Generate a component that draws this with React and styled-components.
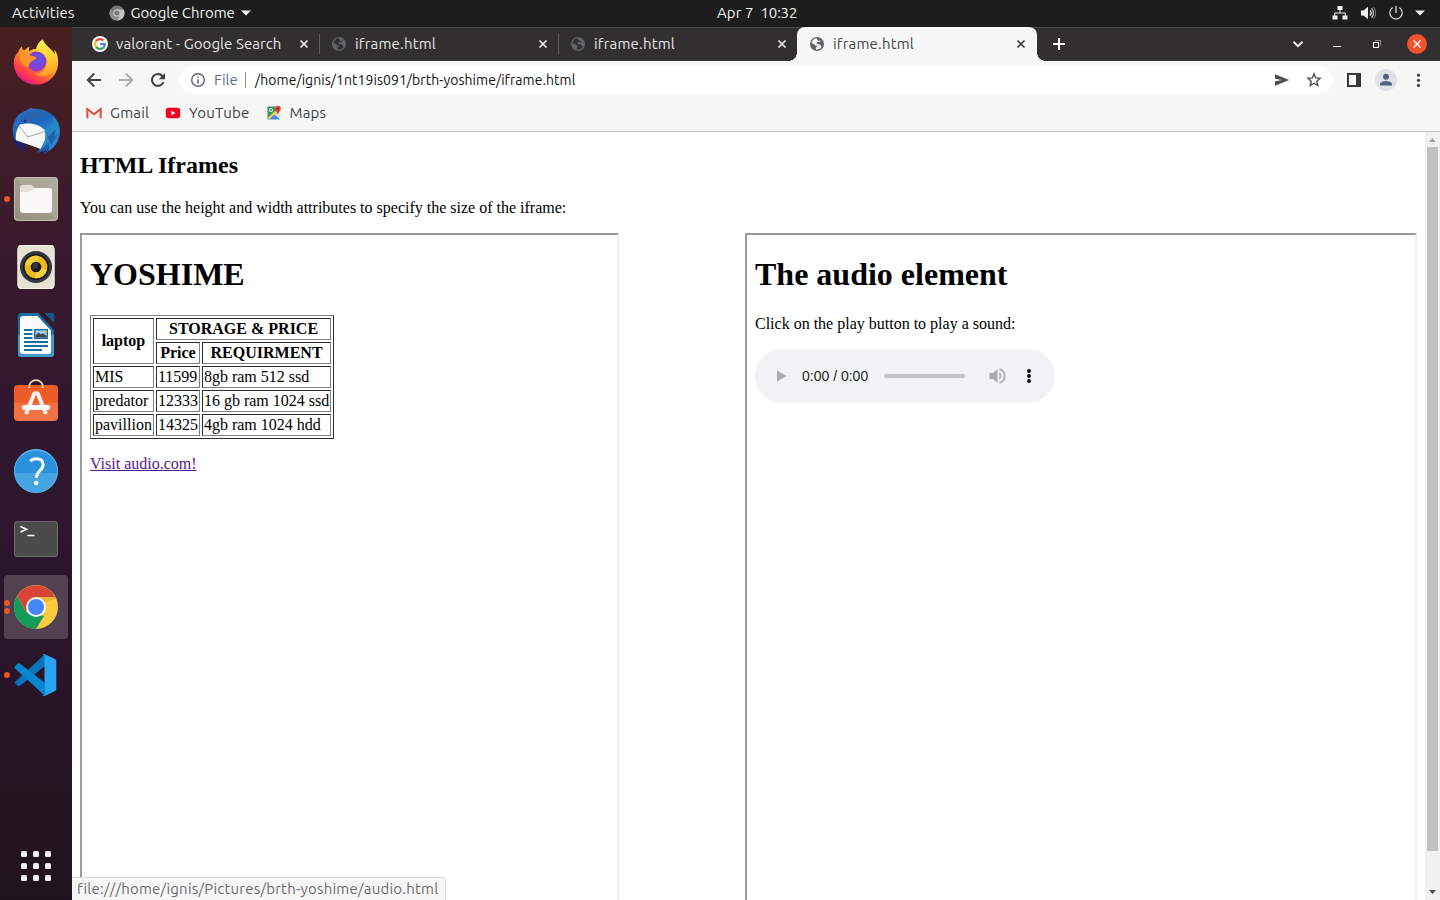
import React from 'react';
import styled, { createGlobalStyle } from 'styled-components';

const GlobalStyle = createGlobalStyle`
  *, *::before, *::after { box-sizing: border-box; }
  html, body { margin: 0; height: 100%; overflow: hidden; }
  svg { display: block; flex: none; }
`;

const Desktop = styled.div`
  width: 1440px;
  height: 900px;
  display: flex;
  flex-direction: column;
  overflow: hidden;
  background: #1d1d1d;
  font-family: 'Ubuntu', 'Noto Sans', sans-serif;
  font-size: 15px;
`;

const Label = styled.span`
  font-size: ${(p) => p.$size || 15}px;
  line-height: 20px;
  letter-spacing: ${(p) => p.$track || 0}px;
  white-space: pre;
`;

/* ---------- top bar ---------- */
const TopBar = styled.header`
  height: 27px;
  flex: none;
  display: grid;
  grid-template-columns: 717px 1fr auto;
  align-items: center;
  padding: 0 10px 1px 0;
  color: #f2f2f2;
  background: #1d1d1d;
`;
const TopLeft = styled.div`
  display: flex;
  align-items: center;
  padding-left: 12px;
`;
const AppMenu = styled.div`
  display: flex;
  align-items: center;
  gap: 6px;
  margin-left: 34px;
`;
const Clock = styled.div`
  display: flex;
  gap: 7px;
`;
const Tray = styled.div`
  display: flex;
  align-items: center;
`;
const TrayIcon = styled.div`
  width: ${(p) => p.$w}px;
  display: flex;
  justify-content: center;
`;

/* ---------- dock ---------- */
const Body = styled.div`
  flex: 1;
  min-height: 0;
  display: flex;
`;
const Dock = styled.nav`
  width: 72px;
  flex: none;
  display: flex;
  flex-direction: column;
  gap: 4px;
  padding: 4px 4px 2px;
  background: linear-gradient(#482021 0%, #3b1a2b 21%, #30172f 45%, #2a152b 72%, #24141f 90%, #21131b 100%);
`;
const DockItem = styled.div`
  width: 64px;
  height: 64px;
  flex: none;
  display: flex;
  align-items: center;
  border-radius: 4px;
  background: ${(p) => (p.$active ? '#524251' : 'transparent')};
`;
const Dots = styled.div`
  width: 6px;
  margin-right: 2px;
  display: flex;
  flex-direction: column;
  gap: 2px;
`;
const Dot = styled.i`
  width: 6px;
  height: 6px;
  border-radius: 50%;
  background: #e95420;
`;
const AppsButton = styled.div`
  margin-top: auto;
  height: 64px;
  display: grid;
  grid-template-columns: repeat(3, 6px);
  grid-auto-rows: 6px;
  gap: 6px;
  place-content: center;
`;
const AppsDot = styled.i`
  border-radius: 1.5px;
  background: #f0efee;
`;

/* ---------- browser ---------- */
const Browser = styled.main`
  flex: 1;
  min-width: 0;
  display: flex;
  flex-direction: column;
  background: #f7f7f7;
`;
const TabStrip = styled.div`
  height: 34px;
  flex: none;
  display: flex;
  padding-left: 8px;
  background: #322f30;
  box-shadow: inset 0 1px 0 #484546;
`;
const Tab = styled.div`
  position: relative;
  width: ${(p) => (p.$active ? 240 : 239)}px;
  display: flex;
  align-items: center;
  gap: 8px;
  padding: 0 ${(p) => (p.$active ? 11 : 10)}px 0 12px;
  color: ${(p) => (p.$active ? '#45464a' : '#e6e6e6')};
  background: ${(p) => (p.$active ? '#f7f7f7' : 'transparent')};
  border-radius: 8px 8px 0 0;

  &::before, &::after {
    content: '';
    display: ${(p) => (p.$active ? 'block' : 'none')};
    position: absolute;
    bottom: 0;
    width: 8px;
    height: 8px;
  }
  &::before { left: -8px; background: radial-gradient(circle at 0 0, transparent 7.5px, #f7f7f7 8px); }
  &::after { right: -8px; background: radial-gradient(circle at 100% 0, transparent 7.5px, #f7f7f7 8px); }
`;
const TabTitle = styled(Label)`
  flex: 1;
`;
const TabDivider = styled.i`
  width: 1px;
  height: 20px;
  margin: 7px -1px 0 0;
  background: #5f5d5e;
`;
const NewTab = styled.div`
  display: flex;
  align-items: center;
  margin-left: 16px;
`;
const WindowControls = styled.div`
  margin-left: auto;
  padding-right: 3px;
  display: flex;
  align-items: center;
`;
const Control = styled.div`
  width: ${(p) => p.$w || 40}px;
  display: flex;
  justify-content: center;
`;
const Toolbar = styled.div`
  height: 38px;
  flex: none;
  display: flex;
  align-items: center;
  padding: 0 6px;
`;
const ToolButton = styled.div`
  width: 32px;
  display: flex;
  justify-content: center;
`;
const Omnibox = styled.div`
  flex: 1;
  height: 30px;
  margin: 0 6px;
  display: flex;
  align-items: center;
  padding: 0 2px 0 10px;
  border-radius: 15px;
  background: #fff;
`;
const Scheme = styled(Label)`
  width: 24px;
  margin-left: 8px;
  color: #5c6f86;
`;
const OmniDivider = styled.i`
  width: 1px;
  height: 16px;
  margin: 0 9px 0 7px;
  background: #8a8d91;
`;
const Url = styled(Label)`
  flex: 1;
  color: #111;
`;
const Avatar = styled.div`
  width: 22px;
  height: 22px;
  display: grid;
  place-items: center;
  border-radius: 50%;
  background: #dee1e6;
`;
const Bookmarks = styled.div`
  height: 33px;
  flex: none;
  display: flex;
  gap: 16px;
  padding: 4px 14px 0;
  border-bottom: 1px solid #c1c0c0;
  color: #404246;
`;
const Bookmark = styled.div`
  height: 20px;
  display: flex;
  align-items: center;
  gap: 8px;
`;

/* ---------- page ---------- */
const Viewport = styled.div`
  position: relative;
  flex: 1;
  min-height: 0;
  display: flex;
  background: #fff;
`;
const Page = styled.div`
  flex: 1;
  overflow: hidden;
  padding: 0 8px;
  color: #000;
  font-family: 'Liberation Serif', serif;
  font-size: 16px;
  line-height: 18px;
`;
const PageTitle = styled.h2`
  margin: 20px 0;
  font-size: 24px;
  line-height: 27px;
`;
const Text = styled.p`
  margin: 16px 0;
`;
const Frames = styled.div`
  display: flex;
  justify-content: space-between;
`;
const Frame = styled.section`
  width: ${(p) => p.$w}px;
  height: 800px;
  padding: 0 8px;
  border: 2px solid;
  border-color: #9a9a9a #eee #eee #9a9a9a;
`;
const FrameTitle = styled.h1`
  margin: 21px 0 22px;
  font-size: 32px;
  line-height: 37px;
`;
const Table = styled.table`
  border: 1px solid;
  border-color: #808080 #2c2c2c #2c2c2c #808080;
  border-spacing: 2px;

  th, td {
    padding: 1px;
    border: 1px solid;
    border-color: #2c2c2c #808080 #808080 #2c2c2c;
  }
`;
const Visited = styled.span`
  color: #551a8b;
  text-decoration: underline;
`;
const Player = styled.div`
  width: 300px;
  height: 54px;
  display: flex;
  align-items: center;
  padding: 0 10px;
  border-radius: 27px;
  background: #f1f3f4;
`;
const PlayerButton = styled.div`
  width: 32px;
  display: flex;
  justify-content: center;
`;
const Time = styled.span`
  margin-left: 5px;
  font: 14px 'Liberation Sans', sans-serif;
  color: #1f1f1f;
`;
const Track = styled.div`
  flex: 1;
  height: 4px;
  margin: 0 16px;
  border-radius: 2px;
  background: #c3c4c5;
`;
const Scrollbar = styled.div`
  width: 15px;
  display: flex;
  flex-direction: column;
  align-items: center;
  background: #f1f1f1;
`;
const ScrollArrow = styled.div`
  height: ${(p) => p.$h || 15}px;
  display: grid;
  place-items: center;
`;
const Thumb = styled.div`
  width: 11px;
  height: 704px;
  margin-bottom: auto;
  background: #c1c1c1;
`;
const StatusBubble = styled.div`
  position: absolute;
  left: 0;
  bottom: 0;
  width: 374px;
  height: 23px;
  padding: 1px 5px;
  border: 1px solid #d9d9d9;
  border-width: 1px 1px 0 0;
  border-radius: 0 4px 0 0;
  color: #6c6c6e;
  background: #f7f7f7;
`;

/* ---------- icons ---------- */
const Svg = ({ s = 16, w, h, box, ...rest }) => (
  <svg width={w || s} height={h || s} viewBox={box || `0 0 ${w || s} ${h || s}`} fill="none" {...rest} />
);

const Globe = ({ color, land }) => (
  <Svg s={16}>
    <circle cx="8" cy="8" r="7" fill={color} />
    <path d="M7.7 2.3c-2.2.2-3.700 1.300-4.500 2.900l-.7 1.700 3.300 1.500c.3 1.200 1.300 1.300 2.500 1.200.2 1.300-.8 1.500-1.400 2.200l-.1 1.700c2.800.4 4.800-.7 5.900-2.700-.9-.5-.9-1.500-1.700-2.100-.9-.6-2-.1-2.800-.6-1-.5-.9-1.600 0-2 .9-.4 1.900.3 2.700-.4.4-.4.6-.9.6-1.500-.5.8-1.500 1-2.200.5C8.400 4.100 7.900 3.600 7.700 2.300z" fill={land} />
  </Svg>
);
const Close = ({ color }) => (
  <Svg s={10}><path d="M1.500 1.500l7 7M8.500 1.500l-7 7" stroke={color} strokeWidth="1.7" /></Svg>
);
const Caret = () => <Svg w={10} h={6}><path d="M0 .5h10L5 5.500z" fill="#f2f2f2" /></Svg>;

const Google = () => (
  <Svg s={16}>
    <circle cx="8" cy="8" r="8" fill="#fff" />
    <g strokeWidth="2.100">
      <path d="M4 5.200A4.900 4.900 0 0 1 11.500 4.600" stroke="#ea4335" />
      <path d="M4 5.200A4.900 4.900 0 0 0 4 10.800" stroke="#fbbc05" />
      <path d="M4 10.800A4.900 4.900 0 0 0 11.300 11.600" stroke="#34a853" />
      <path d="M11.300 11.600A4.900 4.900 0 0 0 12.900 8H8" stroke="#4285f4" />
    </g>
  </Svg>
);
const GrayChrome = () => (
  <Svg s={16}>
    <circle cx="8" cy="8" r="7.500" fill="#787878" />
    <path d="M8 4.500h6.700A7.500 7.500 0 0 1 8 15.500l3-5.700z" fill="#c4c4c4" />
    <path d="M1.600 4A7.500 7.500 0 0 0 8 15.500l3-5.700H5z" fill="#8d8d8d" />
    <circle cx="8" cy="8" r="3.600" fill="#d6d6d6" />
    <circle cx="8" cy="8" r="2.600" fill="#777" />
  </Svg>
);

const Firefox = () => (
  <Svg s={48} box="0 1 48 48">
    <defs>
      <linearGradient id="ff1" x1="38" y1="5" x2="12" y2="45" gradientUnits="userSpaceOnUse">
        <stop offset="0" stopColor="#fff44f" /><stop offset=".3" stopColor="#ffbd2e" />
        <stop offset=".55" stopColor="#ff8126" /><stop offset=".8" stopColor="#ff3d49" /><stop offset="1" stopColor="#e01490" />
      </linearGradient>
      <linearGradient id="ff2" x1="30" y1="2" x2="38" y2="42" gradientUnits="userSpaceOnUse">
        <stop offset="0" stopColor="#fff14a" /><stop offset=".55" stopColor="#ffc52f" /><stop offset="1" stopColor="#ff8b25" />
      </linearGradient>
      <radialGradient id="ff3" cx="26" cy="22" r="12" gradientUnits="userSpaceOnUse">
        <stop offset="0" stopColor="#6258e8" /><stop offset=".6" stopColor="#7a43d5" /><stop offset="1" stopColor="#a634b8" />
      </radialGradient>
    </defs>
    <path d="M6.500 14c.4-2 1.500-4 3.200-5.600.2 1.500.7 2.700 1.500 3.700l1.500.2c1.500-1.900 3-2.900 4.900-3.500-.7 1.500-.8 2.900-.3 4.500 6-4.500 13-2.500 17 2.200C40 21 44.500 20 46 22c1.500 13-8.500 24.600-21.500 24.600C11 46.600 1.500 36.500 1.800 24c.1-4 1.700-7.500 4.700-10z" fill="url(#ff1)" />
    <path d="M30.700 1.200c-5.500 3.800-7 8.500-6.600 13C31 14.500 35 19 34.800 25c-.3 7.500-6.300 11.300-12.300 10.800 7.500 4.500 17.500 2.200 21.500-5.300 1.700-3.200 2.700-8.700 1.300-13.500-.6-2.200-1.700-4-3-5.200l.5 4.500C40.500 11 33.500 8.500 30.700 1.200z" fill="url(#ff2)" />
    <circle cx="24.500" cy="23.500" r="10" fill="url(#ff3)" />
    <path d="M8 17c4-3.500 8.500-1.500 11 .8 2 .6 4 .2 5.700 1.700-.7 2-3.800 3-5.700 4.300-1.700 1.200-1 3.500-3.500 5.500-4-1.300-8-6.300-7.500-12.300z" fill="#ff9527" />
  </Svg>
);
const Thunderbird = () => (
  <Svg s={48}>
    <defs><linearGradient id="tb" x1="10" y1="0" x2="38" y2="46" gradientUnits="userSpaceOnUse">
      <stop offset="0" stopColor="#2f6fc2" /><stop offset=".4" stopColor="#1d65bd" /><stop offset=".65" stopColor="#258bd0" /><stop offset="1" stopColor="#1b3f91" />
    </linearGradient></defs>
    <path d="M15 3l4-2.500 1.500 1.300C37 .5 48 12 48 24c0 11-7 20-17 22.700l4-3.500-10 2.600 3-5L3 33C-2 22 1 8 15 3z" fill="url(#tb)" />
    <path d="M1.300 32c2 6.500 7 11.500 12.200 13.500-1-3-1-5.500-.3-8.300z" fill="#1e2163" />
    <path d="M8 17.500c10-2.500 20 0 25 6l1 8-5.500 10.500C21 38.500 12 36.500 4 33.200c-.5-6 .5-11 4-15.700z" fill="#f8f8f9" />
    <path d="M7.500 19l8 11L33 24.500" stroke="#a5a5ae" strokeWidth="1" />
    <path d="M8 15c1-7 6-12 14-12 8 0 12 5 11 10-5-4-12-3-15 3-3-1-6-1-10-1z" fill="#2b63ad" opacity=".75" />
    <circle cx="13" cy="14" r="1.500" fill="#19376d" />
    <path d="M33 24c7-3 9-8 9-14 6 8 7 17 3 25-2 4-5 7-9 9 2-4 1-7 0-9-2 4-4 6-7 7 4-6 5-11 4-18z" fill="#2687cb" />
    <path d="M36 30l8-8-2 8 4-3-7 11z" fill="#154b96" opacity=".65" />
  </Svg>
);
const Files = () => (
  <Svg s={48}>
    <defs><linearGradient id="fl" x1="0" y1="48" x2="48" y2="0" gradientUnits="userSpaceOnUse"><stop stopColor="#958f7e" /><stop offset=".5" stopColor="#a09b8b" /><stop offset=".51" stopColor="#aaa596" /><stop offset="1" stopColor="#b0ac9f" /></linearGradient></defs>
    <rect x="2" y="2" width="44" height="44" rx="4" fill="url(#fl)" />
    <rect x="2.500" y="2.500" width="43" height="43" rx="3.500" stroke="#c0bcae" />
    <path d="M8 13c0-2 1-3 3-3h8c2 0 2.500 3 4.500 3v9H8z" fill="#e1dfd6" />
    <path d="M8 17c4 0 9 .2 12-1.200 1.500-1.200 2-2.800 4-2.800h13c2 0 3 1 3 3v19c0 2-1 3-3 3H11c-2 0-3-1-3-3z" fill="#faf9f7" />
  </Svg>
);
const Rhythmbox = () => (
  <Svg s={48}>
    <rect x="5.500" y="2" width="37" height="44" rx="4" fill="#e6e1d5" />
    <rect x="6" y="2.500" width="36" height="43" rx="3.500" stroke="#f4f1e9" />
    <circle cx="24" cy="24" r="16" fill="#343941" />
    <circle cx="24" cy="24" r="13" fill="#17191d" />
    <circle cx="24" cy="24" r="11.300" fill="#edb916" />
    <path d="M24 24L13 21.500A11.300 11.300 0 0 1 27 13zM24 24l11 3a11.300 11.300 0 0 1-12 8.300z" fill="#f8cf38" />
    <circle cx="24" cy="24" r="5.300" fill="#17191b" />
    <circle cx="23.300" cy="23" r="3" fill="#34363a" />
  </Svg>
);
const Writer = () => (
  <Svg s={48}>
    <path d="M10 2h16l16 17v23c0 3-1 4-4 4H10c-3 0-4-1-4-4V6c0-3 1-4 4-4z" fill="#146fa5" />
    <path d="M6 24h36v18c0 3-1 4-4 4H10c-3 0-4-1-4-4z" fill="#4299cb" />
    <path d="M11 5h14.500L39 19.500V40c0 2-1 3-3 3H11c-2 0-3-1-3-3V8c0-2 1-3 3-3z" fill="#fbfbfb" />
    <path d="M32 2h8c1.500 0 2.300.8 2.300 2.300V12z" fill="#135a88" />
    <path d="M12 19h8.500M12 23h8.500M12 27h8.500M12 31h24M12 35h24M12 39h18" stroke="#176d9d" strokeWidth="2" />
    <rect x="22.700" y="18.700" width="12.600" height="8.600" fill="#9ccdf0" stroke="#1b6d9d" strokeWidth="1.400" />
    <path d="M23.500 26.500v-2l3-3 2.500 2 2-1.300 3.500 3v1.300z" fill="#40464a" />
    <path d="M31.500 19.500h3v3z" fill="#f6b72d" />
  </Svg>
);
const Software = () => (
  <Svg s={48} box="0 3 48 48">
    <path d="M2 13a4 4 0 0 1 4-4h36a4 4 0 0 1 4 4v14H2z" fill="#ee5c27" />
    <path d="M2 27h44v14a4 4 0 0 1-4 4H6a4 4 0 0 1-4-4z" fill="#f17245" />
    <path d="M17.300 12v-1.500a6.700 6.400 0 0 1 13.400 0V12" stroke="#f5d4ae" strokeWidth="1.700" />
    <path d="M14 38l8.300-20.500h3.400L34 38" stroke="#fff1e9" strokeWidth="4" strokeLinejoin="round" />
    <rect x="10" y="29" width="28" height="5" rx="2.500" fill="#fff" />
  </Svg>
);
const Help = () => (
  <Svg s={48}>
    <circle cx="24" cy="24" r="22" fill="#45a5e3" />
    <path d="M2 26a22 22 0 1 1 44 0z" fill="#2a90dc" />
    <circle cx="24" cy="24" r="21.500" stroke="#62b5e9" strokeWidth=".8" />
    <path d="M18.500 14.200c1.300-1.800 3.200-2.400 5.700-2.400 4.300 0 6.900 2.200 6.900 5.900 0 6-6.600 6.200-6.600 12.400v1" stroke="#fff" strokeWidth="3" />
    <circle cx="24.300" cy="36" r="2.300" fill="#fff" />
  </Svg>
);
const Terminal = () => (
  <Svg s={48}>
    <rect x="2" y="6" width="44" height="36" rx="3.500" fill="#4b4b4b" />
    <rect x="2.500" y="6.500" width="43" height="35" rx="3" stroke="#6d6b69" />
    <path d="M8.500 11.500l6 2.800-6 2.800" stroke="#fff" strokeWidth="1.700" />
    <path d="M15.500 20.500h7" stroke="#fff" strokeWidth="1.500" />
  </Svg>
);
const Chrome = () => (
  <Svg s={48}>
    <circle cx="24" cy="24" r="22" fill="#fdcb3d" />
    <path d="M5 13A22 22 0 0 1 43.100 14H24L14 29z" fill="#da4437" />
    <path d="M5 13A22 22 0 0 0 24 46l8-13-18-4z" fill="#119d58" />
    <path d="M24 14h19.100l.9 2-13 4z" fill="#dca42f" opacity=".5" />
    <circle cx="24" cy="24" r="10" fill="#f5f5f6" />
    <circle cx="24" cy="24" r="8" fill="#4486f5" />
  </Svg>
);
const Code = () => (
  <Svg s={48} box="1 0 48 48">
    <path d="M3.500 31.500l3 2.900c1 .7 2 .7 2.800 0L34 15V3z" fill="#0875ba" />
    <path d="M3.500 16l3-3c1-.8 2-.8 2.800 0L34 33.500V45z" fill="#0787d2" />
    <path d="M33.500 3.200L44 8c.8.500 1.300 1.200 1.300 2.200v27.600c0 1-.5 1.700-1.300 2.200l-10.500 5c-.9.300-1.900.1-2.600-.6 1.300.6 2.600 0 2.600-2V5.500c0-1.800-1.400-2.500-2.600-1.800.7-.7 1.700-.9 2.600-.5z" fill="#27a5f1" />
    <path d="M4 17.500a1.500 1.500 0 0 1 0-2.200l2.500-2.300c1-.8 2-.8 2.800 0L34 32v12.500z" fill="#0787d2" />
  </Svg>
);

const Gmail = () => (
  <Svg s={16}>
    <path d="M1 3h14v10H1z" fill="#f3f1f1" />
    <path d="M1 13L6 8.500M15 13l-5-4.500" stroke="#d5d2d2" />
    <path d="M1.300 13.200V4L8 9.300 14.700 4v9.200" stroke="#dd4b3f" strokeWidth="2" />
  </Svg>
);
const YouTube = () => (
  <Svg s={16}><rect x=".8" y="2.800" width="14.400" height="10.400" rx="2.700" fill="#f8001e" /><path d="M6.400 5.700L10.500 8l-4.100 2.300z" fill="#fff" /></Svg>
);
const Maps = () => (
  <Svg s={16}>
    <path d="M2 2h12v12H2z" fill="#e4e5e6" />
    <path d="M1.500 2.500c0-1 .5-1 1-1H9l2 5-8.500 8c-1 0-1-.5-1-1z" fill="#279b58" />
    <path d="M2.500 14.500L8 9l6 5.500z" fill="#4587ef" />
    <path d="M1.500 13L10 5l2 1.500-9 8z" fill="#f8cb43" />
    <path d="M8.300 8.700l6.200 4.800V7z" fill="#dadcde" />
    <circle cx="5" cy="5" r="1.600" stroke="#fff" />
    <path d="M11.800 9.600c-.3-2.200-2.900-3.300-2.900-6a2.900 2.900 0 0 1 5.900 0c0 2.700-2.700 3.800-3 6z" fill="#e24337" />
    <circle cx="11.900" cy="3.700" r="1" fill="#801d20" />
  </Svg>
);

const dockItems = [
  { Icon: Firefox, dots: 0 },
  { Icon: Thunderbird, dots: 0 },
  { Icon: Files, dots: 1 },
  { Icon: Rhythmbox, dots: 0 },
  { Icon: Writer, dots: 0 },
  { Icon: Software, dots: 0 },
  { Icon: Help, dots: 0 },
  { Icon: Terminal, dots: 0 },
  { Icon: Chrome, dots: 2, active: true },
  { Icon: Code, dots: 1 },
];

const laptops = [
  ['MIS', '11599', '8gb ram 512 ssd'],
  ['predator', '12333', '16 gb ram 1024 ssd'],
  ['pavillion', '14325', '4gb ram 1024 hdd'],
];

function SystemBar() {
  return (
    <TopBar>
      <TopLeft>
        <Label $track={0.1}>Activities</Label>
        <AppMenu>
          <GrayChrome />
          <Label $track={-0.07}>Google Chrome</Label>
          <Caret />
        </AppMenu>
      </TopLeft>
      <Clock><Label $track={0.1}>Apr 7</Label><Label $track={-0.2}>10:32</Label></Clock>
      <Tray>
        <TrayIcon $w={28}>
          <Svg s={16}><path d="M8 5v3M2.700 12V8h10.600v4" stroke="#f2f2f2" /><path d="M5.500 1h5v4h-5zM.5 10.500h5v4h-5zM10.500 10.500h5v4h-5z" fill="#f2f2f2" /></Svg>
        </TrayIcon>
        <TrayIcon $w={28}>
          <Svg s={16}><path d="M1 5.500h2.500L8 1.800v12.400L3.500 10.500H1z" fill="#f2f2f2" /><path d="M10 5.500a3.600 3.600 0 0 1 0 5" stroke="#f2f2f2" strokeWidth="1.300" /><path d="M11.500 3.300a6.500 6.500 0 0 1 0 9.400" stroke="#c9c9c9" strokeWidth="1.200" /><path d="M13.500 2a9 9 0 0 1 0 12" stroke="#777" strokeWidth="1" /></Svg>
        </TrayIcon>
        <TrayIcon $w={27}>
          <Svg s={16}><path d="M4.700 2.600a6.200 6.200 0 1 0 6.600 0" stroke="#d8d8d8" strokeWidth="1.200" /><path d="M8 1v7" stroke="#f2f2f2" strokeWidth="1.200" /></Svg>
        </TrayIcon>
        <TrayIcon $w={21}><Caret /></TrayIcon>
      </Tray>
    </TopBar>
  );
}

function Launcher() {
  return (
    <Dock>
      {dockItems.map(({ Icon, dots, active }, i) => (
        <DockItem key={i} $active={active}>
          <Dots>{Array.from({ length: dots }, (_, d) => <Dot key={d} />)}</Dots>
          <Icon />
        </DockItem>
      ))}
      <AppsButton>{Array.from({ length: 9 }, (_, i) => <AppsDot key={i} />)}</AppsButton>
    </Dock>
  );
}

function Tabs() {
  return (
    <TabStrip>
      <Tab><Google /><TabTitle $track={0.08}>valorant - Google Search</TabTitle><Close color="#eee" /></Tab>
      <TabDivider />
      <Tab><Globe color="#5f6368" land="#322f30" /><TabTitle $track={0.18}>iframe.html</TabTitle><Close color="#eee" /></Tab>
      <TabDivider />
      <Tab><Globe color="#5f6368" land="#322f30" /><TabTitle $track={0.18}>iframe.html</TabTitle><Close color="#eee" /></Tab>
      <Tab $active><Globe color="#5f6368" land="#f7f7f7" /><TabTitle $track={0.18}>iframe.html</TabTitle><Close color="#3c3d40" /></Tab>
      <NewTab><Svg s={12}><path d="M6 0v12M0 6h12" stroke="#fff" strokeWidth="2" /></Svg></NewTab>
      <WindowControls>
        <Control $w={38}><Svg s={12}><path d="M1.500 3.800L6 8.200l4.500-4.400" stroke="#eee" strokeWidth="1.900" /></Svg></Control>
        <Control><Svg s={12}><path d="M2 8.500h8" stroke="#fff" /></Svg></Control>
        <Control><Svg s={12}><path d="M4 2.500h5.500V8" stroke="#8d8b8c" /><rect x="2.500" y="4.500" width="5" height="5" stroke="#fff" /></Svg></Control>
        <Control><Svg s={20}><circle cx="10" cy="10" r="10" fill="#f0542d" /><path d="M6.500 6.500l7 7M13.500 6.500l-7 7" stroke="#fff" strokeWidth="1.400" /></Svg></Control>
      </WindowControls>
    </TabStrip>
  );
}

function AddressBar() {
  return (
    <Toolbar>
      <ToolButton><Svg s={16}><path d="M15 8H2M8.300 1.500L1.800 8l6.500 6.500" stroke="#3c3f43" strokeWidth="1.900" /></Svg></ToolButton>
      <ToolButton><Svg s={16}><path d="M1 8h13M7.700 1.500L14.200 8l-6.500 6.500" stroke="#adadad" strokeWidth="1.900" /></Svg></ToolButton>
      <ToolButton><Svg s={16}><path d="M13.400 10A5.900 5.900 0 1 1 12.300 4L14 5.700" stroke="#3c3f43" strokeWidth="2" /><path d="M15 1v6.200H8.800z" fill="#3c3f43" /></Svg></ToolButton>
      <Omnibox>
        <Svg s={16}><circle cx="8" cy="8" r="6.300" stroke="#5f6368" strokeWidth="1.400" /><path d="M8 7.200v4.300M8 4.400v1.500" stroke="#5f6368" strokeWidth="1.500" /></Svg>
        <Scheme>File</Scheme>
        <OmniDivider />
        <Url $size={14} $track={0.05}>/home/ignis/1nt19is091/brth-yoshime/iframe.html</Url>
        <ToolButton><Svg s={16}><path d="M1 2.200L15.200 8 1 13.800V9.300L8 8 1 6.700z" fill="#4b4e52" /></Svg></ToolButton>
        <ToolButton><Svg s={16}><path d="M8 1.900l1.700 4 4.400.4-3.300 2.900 1 4.300L8 11.200l-3.800 2.300 1-4.300-3.300-2.900 4.400-.4z" stroke="#4b4e52" strokeWidth="1.400" /></Svg></ToolButton>
      </Omnibox>
      <ToolButton><Svg s={16}><path d="M1 1h14v14H1zM3 3v10h7V3z" fill="#393939" fillRule="evenodd" /></Svg></ToolButton>
      <ToolButton><Avatar><Svg s={14}><circle cx="7" cy="3.800" r="3" fill="#56627a" /><path d="M1 12.500v-1.500c0-2 4-3 6-3s6 1 6 3v1.500z" fill="#56627a" /></Svg></Avatar></ToolButton>
      <ToolButton><Svg s={16}><g fill="#3c3f43"><circle cx="8.500" cy="3.200" r="1.600" /><circle cx="8.500" cy="8.300" r="1.600" /><circle cx="8.500" cy="13.400" r="1.600" /></g></Svg></ToolButton>
    </Toolbar>
  );
}

export default function App() {
  return (
    <Desktop>
      <GlobalStyle />
      <SystemBar />
      <Body>
        <Launcher />
        <Browser>
          <Tabs />
          <AddressBar />
          <Bookmarks>
            <Bookmark><Gmail /><Label $track={0.18}>Gmail</Label></Bookmark>
            <Bookmark><YouTube /><Label $track={0.22}>YouTube</Label></Bookmark>
            <Bookmark><Maps /><Label $track={0.17}>Maps</Label></Bookmark>
          </Bookmarks>
          <Viewport>
            <Page>
              <PageTitle>HTML Iframes</PageTitle>
              <Text>You can use the height and width attributes to specify the size of the iframe:</Text>
              <Frames>
                <Frame $w={539}>
                  <FrameTitle>YOSHIME</FrameTitle>
                  <Table>
                    <tbody>
                      <tr><th rowSpan="2">laptop</th><th colSpan="2">STORAGE &amp; PRICE</th></tr>
                      <tr><th>Price</th><th>REQUIRMENT</th></tr>
                      {laptops.map((row) => (
                        <tr key={row[0]}>{row.map((cell) => <td key={cell}>{cell}</td>)}</tr>
                      ))}
                    </tbody>
                  </Table>
                  <Text><Visited>Visit audio.com!</Visited></Text>
                </Frame>
                <Frame $w={672}>
                  <FrameTitle>The audio element</FrameTitle>
                  <Text>Click on the play button to play a sound:</Text>
                  <Player>
                    <PlayerButton><Svg s={16}><path d="M4 2.500v11L13.700 8z" fill="#a9abac" /></Svg></PlayerButton>
                    <Time>0:00 / 0:00</Time>
                    <Track />
                    <PlayerButton><Svg s={18}><path d="M1.500 6v6H5l4.500 4V2L5 6z" fill="#a9abac" /><path d="M11.300 5.300c2.800 1.600 2.800 5.800 0 7.400z" fill="#a9abac" /><path d="M11.300 2.200a7 7 0 0 1 0 13.600" stroke="#a9abac" strokeWidth="1.700" /></Svg></PlayerButton>
                    <PlayerButton><Svg s={16}><g fill="#0a0a0a"><circle cx="8" cy="3" r="1.900" /><circle cx="8" cy="8" r="1.900" /><circle cx="8" cy="13" r="1.900" /></g></Svg></PlayerButton>
                  </Player>
                </Frame>
              </Frames>
            </Page>
            <Scrollbar>
              <ScrollArrow><Svg w={7} h={4}><path d="M0 4L3.500 0 7 4z" fill="#a3a3a3" /></Svg></ScrollArrow>
              <Thumb />
              <ScrollArrow $h={17}><Svg w={7} h={4}><path d="M0 0l3.500 4L7 0z" fill="#505050" /></Svg></ScrollArrow>
            </Scrollbar>
            <StatusBubble><Label $track={0.22}>file:///home/ignis/Pictures/brth-yoshime/audio.html</Label></StatusBubble>
          </Viewport>
        </Browser>
      </Body>
    </Desktop>
  );
}
